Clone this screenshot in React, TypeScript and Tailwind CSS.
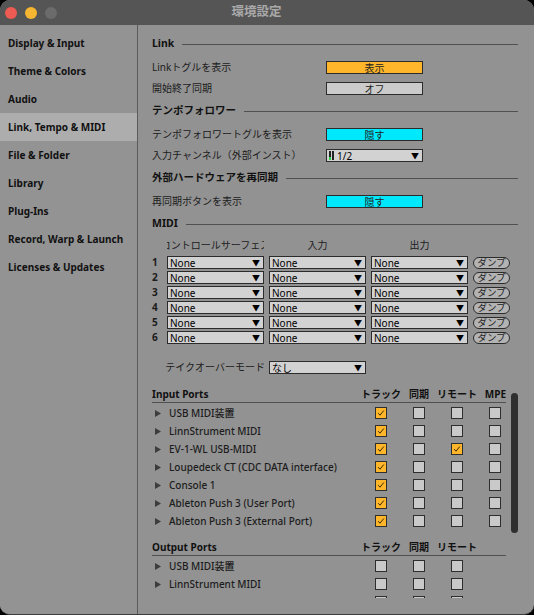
import React from "react";

const FONT = "font-['Noto_Sans','Noto_Sans_CJK_JP',sans-serif]";

const NAV = [
  "Display & Input",
  "Theme & Colors",
  "Audio",
  "Link, Tempo & MIDI",
  "File & Folder",
  "Library",
  "Plug-Ins",
  "Record, Warp & Launch",
  "Licenses & Updates",
];

const INPUTS: { name: string; on: boolean[] }[] = [
  { name: "USB MIDI装置", on: [true, false, false, false] },
  { name: "LinnStrument MIDI", on: [true, false, false, false] },
  { name: "EV-1-WL USB-MIDI", on: [true, false, true, false] },
  { name: "Loupedeck CT (CDC DATA interface)", on: [true, false, false, false] },
  { name: "Console 1", on: [true, false, false, false] },
  { name: "Ableton Push 3 (User Port)", on: [true, false, false, false] },
  { name: "Ableton Push 3 (External Port)", on: [true, false, false, false] },
];

const OUTPUTS = ["USB MIDI装置", "LinnStrument MIDI", "EV-1-WL USB-MIDI"];

function Header({ title }: { title: string }) {
  return (
    <div className="flex h-[16px] items-center gap-2">
      <span className="text-[10.5px] font-bold text-[#111]">{title}</span>
      <div className="h-px flex-1 bg-[#505050]" />
    </div>
  );
}

function Row({ label, children }: { label: string; children: React.ReactNode }) {
  return (
    <div className="flex h-[21px] items-center">
      <span className="w-[174px] whitespace-nowrap text-[10px] text-[#1c1c1c]">{label}</span>
      {children}
    </div>
  );
}

function Toggle({ text, color }: { text: string; color: string }) {
  return (
    <div
      className={`flex h-[13px] w-[97px] items-center justify-center border border-[#2b2b2b] text-[10px] leading-none text-[#222] ${color}`}
    >
      {text}
    </div>
  );
}

function Arrow() {
  return <span className="text-[8px] leading-none text-black">▼</span>;
}

function Drop({ children, w = "w-[97px]" }: { children: React.ReactNode; w?: string }) {
  return (
    <div
      className={`flex h-[13px] shrink-0 items-center justify-between border border-[#2b2b2b] bg-[#d2d2d2] pl-[2px] pr-[3px] text-[10px] leading-none text-black ${w}`}
    >
      <span>{children}</span>
      <Arrow />
    </div>
  );
}

function Check({ on }: { on: boolean }) {
  return (
    <div
      className={`flex h-[12px] w-[12px] items-center justify-center border border-[#2e2e2e] ${
        on ? "bg-[#ffb62b]" : "bg-[#c9c9c9]"
      }`}
    >
      {on && (
        <svg width="8" height="8" viewBox="0 0 8 8">
          <polyline points="1.2,4.2 3,6.2 6.8,1.5" fill="none" stroke="#3a2a00" strokeWidth="1" />
        </svg>
      )}
    </div>
  );
}

function PortName({ name }: { name: string }) {
  return (
    <div className="flex items-center whitespace-nowrap">
      <svg className="ml-[3px] mr-[8px]" width="6" height="7" viewBox="0 0 6 7">
        <polygon points="0,0 6,3.5 0,7" fill="#3c3c3c" />
      </svg>
      <span className="text-[10px] font-medium text-[#1c1c1c]">{name}</span>
    </div>
  );
}

function PortHeader({ title, mpe }: { title: string; mpe?: boolean }) {
  return (
    <div className="grid h-[17px] w-[354px] grid-cols-[1fr_38px_38px_38px_30px] items-center whitespace-nowrap border-b border-[#505050] text-[10px] font-bold text-[#111]">
      <span>{title}</span>
      <span className="flex justify-center">トラック</span>
      <span className="flex justify-center">同期</span>
      <span className="flex justify-center">リモート</span>
      <span className="text-right">{mpe ? "MPE" : ""}</span>
    </div>
  );
}

export default function App() {
  return (
    <div className={`h-[615px] w-[534px] bg-black ${FONT}`}>
      <div className="flex h-[615px] w-[534px] flex-col overflow-hidden rounded-[10px] border-b border-[#3c3c3c] bg-[#929292]">
        {/* title bar */}
        <div className="flex h-[25px] shrink-0 items-center bg-[#555555]">
          <div className="flex gap-[8px] pl-[5px]">
            <div className="h-[12px] w-[12px] rounded-full bg-[#ee5b52]" />
            <div className="h-[12px] w-[12px] rounded-full bg-[#f7b631]" />
            <div className="h-[12px] w-[12px] rounded-full bg-[#6b6b6b]" />
          </div>
          <div className="flex flex-1 justify-center pr-[78px] text-[12.5px] font-bold text-[#a9a9a9]">
            環境設定
          </div>
        </div>

        <div className="flex min-h-0 flex-1">
          {/* sidebar */}
          <aside className="w-[138px] shrink-0 border-r border-[#5b5b5b] bg-[#939393] pt-[4px]">
            {NAV.map((n) => (
              <div
                key={n}
                className={`flex h-[28px] items-center pl-[8px] text-[10px] font-bold text-[#111] ${
                  n === "Link, Tempo & MIDI" ? "bg-[#adadad]" : ""
                }`}
              >
                {n}
              </div>
            ))}
          </aside>

          {/* content */}
          <div className="relative min-w-0 flex-1">
            <div className="h-[573px] overflow-hidden pl-[14px] pr-[16px] pt-[11px]">
              <Header title="Link" />
              <div className="mt-[5px]">
                <Row label="Linkトグルを表示">
                  <Toggle text="表示" color="bg-[#ffb62b]" />
                </Row>
                <Row label="開始終了同期">
                  <Toggle text="オフ" color="bg-[#cbcbcb]" />
                </Row>
              </div>

              <div className="mt-[4px]">
                <Header title="テンポフォロワー" />
              </div>
              <div className="mt-[5px]">
                <Row label="テンポフォロワートグルを表示">
                  <Toggle text="隠す" color="bg-[#00e8fb]" />
                </Row>
                <Row label="入力チャンネル（外部インスト）">
                  <div className="flex h-[13px] w-[97px] items-center justify-between border border-[#2b2b2b] bg-[#d2d2d2] pl-[2px] pr-[3px] text-[10px] leading-none text-black">
                    <span className="flex items-center gap-[3px]">
                      <span className="flex gap-[1px]">
                        <span className="flex h-[9px] w-[2px] flex-col bg-[#222]">
                          <span className="mt-auto h-[3px] w-[2px] bg-[#2bd34a]" />
                        </span>
                        <span className="h-[9px] w-[2px] bg-[#222]" />
                      </span>
                      1/2
                    </span>
                    <Arrow />
                  </div>
                </Row>
              </div>

              <div className="mt-[4px]">
                <Header title="外部ハードウェアを再同期" />
              </div>
              <div className="mt-[5px]">
                <Row label="再同期ボタンを表示">
                  <Toggle text="隠す" color="bg-[#00e8fb]" />
                </Row>
              </div>

              <div className="mt-[4px]">
                <Header title="MIDI" />
              </div>

              {/* MIDI table */}
              <div className="mt-[5px] flex h-[16px] items-center whitespace-nowrap pl-[15px] text-[10px] text-[#1c1c1c]">
                <div className="w-[97px] overflow-hidden">
                  <div className="-ml-[7px] w-[111px] text-center">コントロールサーフェス</div>
                </div>
                <div className="ml-[5px] w-[97px] text-center">入力</div>
                <div className="ml-[5px] w-[97px] text-center">出力</div>
              </div>
              <div className="mt-[2px]">
                {[1, 2, 3, 4, 5, 6].map((n) => (
                  <div key={n} className="flex h-[15px] items-center gap-[5px]">
                    <span className="w-[10px] text-[10px] font-bold text-[#1c1c1c]">{n}</span>
                    <Drop>None</Drop>
                    <Drop>None</Drop>
                    <Drop>None</Drop>
                    <div className="flex h-[12px] w-[37px] items-center justify-center rounded-full border border-[#2b2b2b] bg-[#b3b3b3] text-[9.5px] leading-none text-[#222]">
                      ダンプ
                    </div>
                  </div>
                ))}
              </div>

              <div className="mt-[15px] flex h-[15px] items-center pl-[14px]">
                <span className="mr-[4px] flex w-[99px] shrink-0 justify-end whitespace-nowrap text-[10px] text-[#1c1c1c]">
                  テイクオーバーモード
                </span>
                <Drop>なし</Drop>
              </div>

              {/* input ports */}
              <div className="mt-[11px] w-[362px]">
                <PortHeader title="Input Ports" mpe />
                <div className="mt-[1px]">
                  {INPUTS.map((p) => (
                    <div key={p.name} className="grid h-[18px] grid-cols-[1fr_38px_38px_38px_38px] items-center">
                      <PortName name={p.name} />
                      {p.on.map((v, i) => (
                        <div key={i} className="flex justify-center">
                          <Check on={v} />
                        </div>
                      ))}
                    </div>
                  ))}
                </div>
              </div>

              {/* output ports */}
              <div className="mt-[9px] w-[362px]">
                <PortHeader title="Output Ports" />
                <div className="mt-[1px]">
                  {OUTPUTS.map((p) => (
                    <div key={p} className="grid h-[18px] grid-cols-[1fr_38px_38px_38px_38px] items-center">
                      <PortName name={p} />
                      {[0, 1, 2].map((i) => (
                        <div key={i} className="flex justify-center">
                          <Check on={false} />
                        </div>
                      ))}
                    </div>
                  ))}
                </div>
              </div>
            </div>

            {/* scrollbar overlay */}
            <div className="absolute left-[373px] top-[368px] h-[140px] w-[7px] rounded-full bg-[#2f2f2f]" />
          </div>
        </div>
      </div>
    </div>
  );
}
